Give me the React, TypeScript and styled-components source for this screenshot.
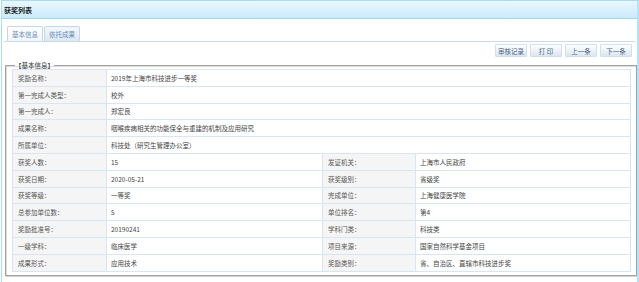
import React from "react";
import styled, { createGlobalStyle } from "styled-components";

const GlobalStyle = createGlobalStyle`
  html, body {
    margin: 0;
    padding: 0;
    background: #ffffff;
  }
  body {
    font-family: "Noto Sans CJK SC", "Noto Sans", sans-serif;
    color: #444;
  }
`;

const Frame = styled.main`
  box-sizing: border-box;
  width: 639px;
  height: 282px;
  margin-left: 1px;
  border: 1px solid #a6dcf5;
  border-right: 3px solid #b4e3f8;
  border-bottom: none;
  overflow: hidden;
  display: flex;
  flex-direction: column;
`;

const TitleBar = styled.header`
  height: 17px;
  display: flex;
  align-items: center;
  padding-left: 2px;
  background: linear-gradient(#eaf7fe, #c9ebfb);
  border-bottom: 1px solid #9fd8f4;
  font-size: 7px;
  font-weight: bold;
  color: #222;
`;

const Body = styled.section`
  display: flex;
  flex-direction: column;
  padding: 0 2px;
`;

const TabRow = styled.nav`
  display: flex;
  gap: 1px;
  margin-top: 7px;
  padding-left: 3px;
  border-bottom: 1px solid #c8dbeb;
`;

const Tab = styled.div<{ $active?: boolean }>`
  height: 14px;
  display: flex;
  align-items: center;
  padding: 0 4px;
  border: 1px solid #c4d6e7;
  border-bottom: none;
  border-radius: 2px 2px 0 0;
  background: ${(p) =>
    p.$active
      ? "linear-gradient(#ffffff, #f1f5fa)"
      : "linear-gradient(#f3f7fb, #dde8f3)"};
  color: #6a90b8;
  font-size: 6.5px;
`;

const Toolbar = styled.div`
  display: flex;
  justify-content: flex-end;
  gap: 3px;
  margin-top: 2px;
  padding-right: 3px;
`;

const Button = styled.button`
  box-sizing: border-box;
  width: 32px;
  height: 13px;
  padding: 0;
  border: 1px solid #d3dfea;
  border-radius: 1px;
  background: linear-gradient(#ffffff, #dae6f2);
  color: #4d6680;
  font-family: inherit;
  font-size: 6.5px;
  display: flex;
  align-items: center;
  justify-content: center;
`;

const Group = styled.fieldset`
  margin: 4px 0 0 1px;
  padding: 0 5px 3px 6px;
  border: 1px solid #a3a3a3;
  box-shadow: inset 1px 1px 0 #dcdcdc, 1px 1px 0 #d0d0d0;
  width: 631px;
  box-sizing: border-box;

  > legend {
    padding: 0;
    margin-left: 3px;
    font-size: 6.5px;
    line-height: 8px;
    color: #333;
  }
`;

const InfoTable = styled.table`
  width: 618px;
  border-collapse: collapse;
  table-layout: fixed;
  border: 1px solid #cfe2f3;
  font-size: 6.5px;

  td {
    height: 15.8px;
    padding: 0;
    border: 1px solid #d6e6f5;
    white-space: nowrap;
  }
`;

const Label = styled.td`
  background: #f5f5f5;
  color: #555;
  padding-left: 5px !important;
`;

const Value = styled.td`
  background: #ffffff;
  color: #444;
  padding-left: 4px !important;
`;

type Row = [string, string] | [string, string, string, string];

const rows: Row[] = [
  ["奖励名称：", "2019年上海市科技进步一等奖"],
  ["第一完成人类型：", "校外"],
  ["第一完成人：", "郑宏良"],
  ["成果名称：", "咽喉疾病相关的功能保全与重建的机制及应用研究"],
  ["所属单位：", "科技处（研究生管理办公室）"],
  ["获奖人数：", "15", "发证机关：", "上海市人民政府"],
  ["获奖日期：", "2020-05-21", "获奖级别：", "省级奖"],
  ["获奖等级：", "一等奖", "完成单位：", "上海健康医学院"],
  ["总参加单位数：", "5", "单位排名：", "第4"],
  ["奖励批准号：", "20190241", "学科门类：", "科技类"],
  ["一级学科：", "临床医学", "项目来源：", "国家自然科学基金项目"],
  ["成果形式：", "应用技术", "奖励类别：", "省、自治区、直辖市科技进步奖"],
];

const App = () => {
  return (
    <>
      <GlobalStyle />
      <Frame>
        <TitleBar>获奖列表</TitleBar>
        <Body>
          <TabRow>
            <Tab $active>基本信息</Tab>
            <Tab>依托成果</Tab>
          </TabRow>
          <Toolbar>
            <Button>审核记录</Button>
            <Button>打 印</Button>
            <Button>上一条</Button>
            <Button>下一条</Button>
          </Toolbar>
          <Group>
            <legend>【基本信息】</legend>
            <InfoTable>
              <colgroup>
                <col style={{ width: 94 }} />
                <col style={{ width: 216 }} />
                <col style={{ width: 93 }} />
                <col style={{ width: 215 }} />
              </colgroup>
              <tbody>
                {rows.map((r, i) =>
                  r.length === 2 ? (
                    <tr key={i}>
                      <Label>{r[0]}</Label>
                      <Value colSpan={3}>{r[1]}</Value>
                    </tr>
                  ) : (
                    <tr key={i}>
                      <Label>{r[0]}</Label>
                      <Value>{r[1]}</Value>
                      <Label>{r[2]}</Label>
                      <Value>{r[3]}</Value>
                    </tr>
                  )
                )}
              </tbody>
            </InfoTable>
          </Group>
        </Body>
      </Frame>
    </>
  );
};

export default App;
